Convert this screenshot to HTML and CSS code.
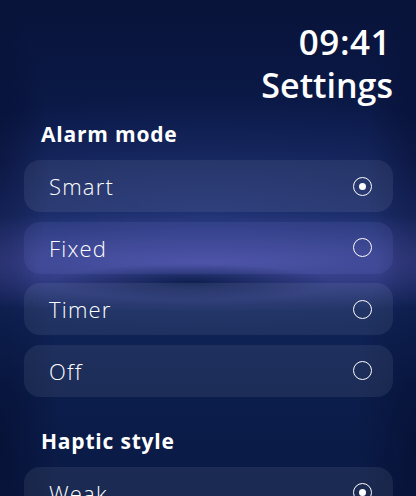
FILE: index.html
```html
<!DOCTYPE html>
<html lang="en">
<head>
<meta charset="utf-8">
<title>Settings</title>
<link rel="stylesheet" href="styles.css">
</head>
<body>
<div class="screen">
  <header class="header">
    <div class="time">09:41</div>
    <h1 class="title">Settings</h1>
  </header>

  <section class="group">
    <h2 class="group-title">Alarm mode</h2>
    <ul class="options">
      <li class="option"><span class="label">Smart</span><span class="radio checked"></span></li>
      <li class="option focused"><span class="label">Fixed</span><span class="radio"></span></li>
      <li class="option"><span class="label">Timer</span><span class="radio"></span></li>
      <li class="option"><span class="label">Off</span><span class="radio"></span></li>
    </ul>
  </section>

  <section class="group">
    <h2 class="group-title">Haptic style</h2>
    <ul class="options">
      <li class="option"><span class="label">Weak</span><span class="radio checked"></span></li>
      <li class="option"><span class="label">Strong</span><span class="radio"></span></li>
    </ul>
  </section>
</div>
</body>
</html>
```

FILE: styles.css
```css
html, body {
  margin: 0;
  padding: 0;
}

body {
  width: 416px;
  height: 496px;
  overflow: hidden;
  background: #0a1843;
  font-family: "Open Sans", "Liberation Sans", sans-serif;
  color: #ffffff;
}

.screen {
  width: 416px;
  height: 496px;
  overflow: hidden;
  box-sizing: border-box;
  padding: 22px 23px 0 24px;
  background:
    radial-gradient(ellipse 50px 160px at 0% 33%, rgba(0, 0, 25, 0.35), rgba(0, 0, 25, 0)),
    radial-gradient(ellipse 50px 160px at 100% 33%, rgba(0, 0, 25, 0.35), rgba(0, 0, 25, 0)),
    radial-gradient(ellipse 60px 220px at 0% 88%, rgba(0, 0, 25, 0.35), rgba(0, 0, 25, 0)),
    radial-gradient(ellipse 60px 220px at 100% 88%, rgba(0, 0, 25, 0.35), rgba(0, 0, 25, 0)),
    radial-gradient(ellipse 140px 18px at 46% 282px, rgba(8, 26, 70, 0.85), rgba(8, 26, 70, 0)),
    radial-gradient(ellipse 520px 50px at 50% 262px, rgba(84, 86, 176, 0.8), rgba(84, 86, 176, 0)),
    radial-gradient(ellipse 420px 120px at 50% 215px, rgba(44, 62, 138, 0.5), rgba(44, 62, 138, 0)),
    linear-gradient(180deg, #081339 0%, #0b1a49 25%, #15275e 45%, #102458 62%, #0b1d4b 80%, #0a1a45 100%);
}

.header {
  display: flex;
  flex-direction: column;
  align-items: flex-end;
}

.time {
  font-size: 35px;
  font-weight: 600;
  line-height: 40px;
  letter-spacing: 0.5px;
  margin-right: 2px;
}

.title {
  margin: 2px 0 0;
  font-size: 34px;
  font-weight: 600;
  line-height: 42px;
  letter-spacing: 0;
}

.group-title {
  margin: 14px 0 12px 17px;
  font-size: 21px;
  font-weight: 700;
  line-height: 28px;
  letter-spacing: 0.8px;
}

.group + .group {
  padding-top: 16px;
}

.options {
  list-style: none;
  margin: 0;
  padding: 0;
  display: flex;
  flex-direction: column;
  gap: 9.5px;
}

.option {
  height: 52px;
  flex: none;
  box-sizing: border-box;
  border-radius: 16px;
  background: rgba(255, 255, 255, 0.07);
  display: flex;
  align-items: center;
  justify-content: space-between;
  padding: 0 21px 0 25px;
}

.option.focused {
  background: rgba(120, 130, 220, 0.12);
}

.label {
  font-size: 22px;
  font-weight: 300;
  letter-spacing: 1.2px;
}

.radio {
  width: 19px;
  height: 19px;
  box-sizing: border-box;
  border: 1.5px solid #ffffff;
  border-radius: 50%;
  display: flex;
  align-items: center;
  justify-content: center;
}

.radio.checked::after {
  content: "";
  width: 7px;
  height: 7px;
  border-radius: 50%;
  background: #ffffff;
}
```
